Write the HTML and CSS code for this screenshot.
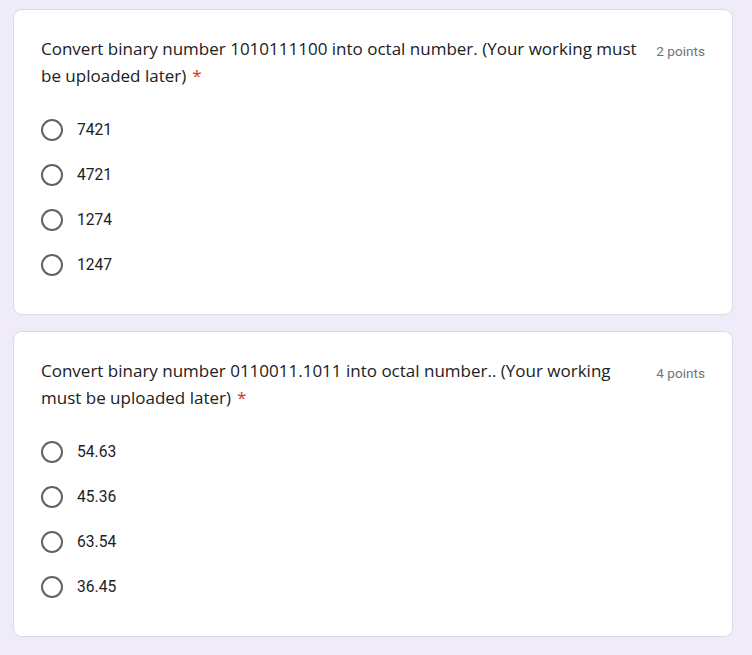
FILE: index.html
```html
<!DOCTYPE html>
<html lang="en">
<head>
<meta charset="utf-8">
<title>Quiz</title>
<link rel="stylesheet" href="styles.css">
</head>
<body>
<main class="form">
  <section class="card">
    <div class="q-head">
      <div class="q-title">Convert binary number 1010111100 into octal number. (Your working must be uploaded later)<span class="req">*</span></div>
      <div class="q-points">2 points</div>
    </div>
    <ul class="options">
      <li class="option"><span class="radio"></span><span class="label">7421</span></li>
      <li class="option"><span class="radio"></span><span class="label">4721</span></li>
      <li class="option"><span class="radio"></span><span class="label">1274</span></li>
      <li class="option"><span class="radio"></span><span class="label">1247</span></li>
    </ul>
  </section>
  <section class="card">
    <div class="q-head">
      <div class="q-title">Convert binary number 0110011.1011 into octal number.. (Your working must be uploaded later)<span class="req">*</span></div>
      <div class="q-points">4 points</div>
    </div>
    <ul class="options">
      <li class="option"><span class="radio"></span><span class="label">54.63</span></li>
      <li class="option"><span class="radio"></span><span class="label">45.36</span></li>
      <li class="option"><span class="radio"></span><span class="label">63.54</span></li>
      <li class="option"><span class="radio"></span><span class="label">36.45</span></li>
    </ul>
  </section>
</main>
</body>
</html>
```
FILE: styles.css
```css
html, body {
  margin: 0;
  padding: 0;
  background: #efebf8;
}
.form {
  width: 720px;
  padding: 9px 0 0 13px;
  display: flex;
  flex-direction: column;
  gap: 16px;
}
.card {
  background: #ffffff;
  border: 1px solid #dadce0;
  border-radius: 9px;
  padding: 26px 27px 26px 27px;
  height: 306px;
  box-sizing: border-box;
}
.q-head {
  display: flex;
  align-items: flex-start;
}
.q-title {
  flex: 1;
  font-family: "Open Sans", sans-serif;
  font-size: 17px;
  line-height: 26.5px;
  color: #202124;
}
.req {
  color: #d93025;
  margin-left: 6px;
}
.q-points {
  margin-left: 17px;
  padding-top: 2px;
  font-family: Roboto, sans-serif;
  font-size: 13.6px;
  line-height: 26.5px;
  color: #70757a;
  white-space: nowrap;
}
.options {
  list-style: none;
  margin: 18px 0 0;
  padding: 0;
}
.option {
  display: flex;
  align-items: center;
  height: 45px;
}
.radio {
  width: 22px;
  height: 22px;
  box-sizing: border-box;
  border: 2px solid #5f6368;
  border-radius: 50%;
  flex-shrink: 0;
}
.label {
  margin-left: 14px;
  font-family: Roboto, sans-serif;
  font-size: 15.6px;
  color: #202124;
}
```
